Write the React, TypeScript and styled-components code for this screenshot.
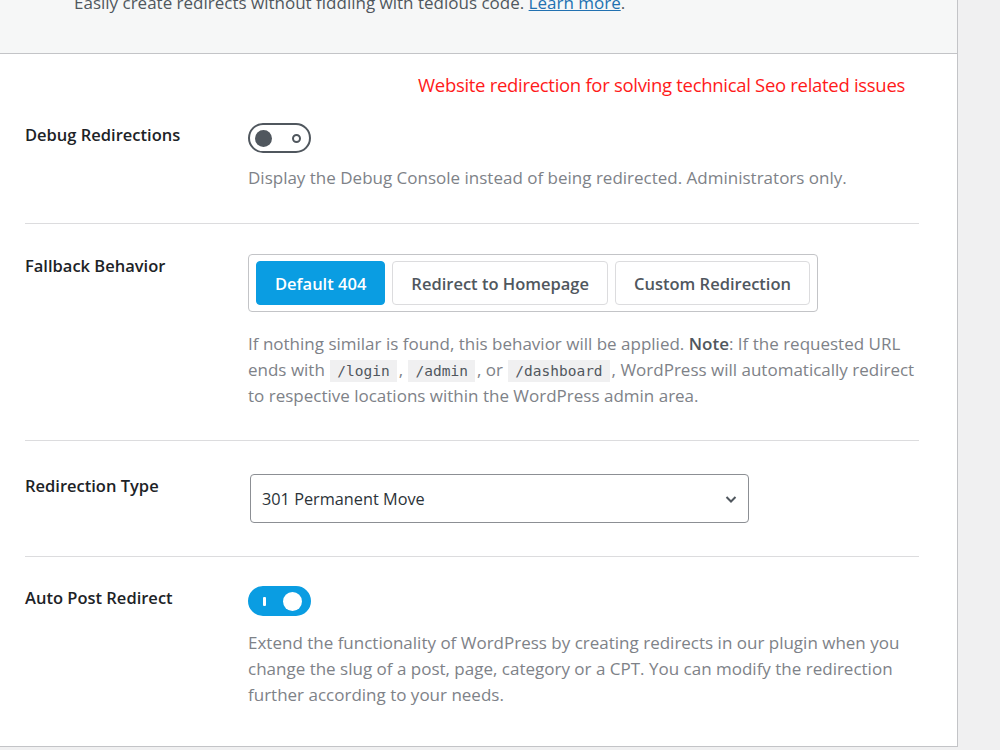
import React from "react";
import styled, { createGlobalStyle } from "styled-components";

const GlobalStyle = createGlobalStyle`
  body {
    margin: 0;
    background: #f0f0f1;
    font-family: "Open Sans", "Noto Sans", sans-serif;
    color: #1d2327;
  }
`;

const Page = styled.div`
  display: flex;
  width: 1000px;
  height: 750px;
  overflow: hidden;
`;

const Card = styled.div`
  width: 957px;
  height: 746px;
  background: #fff;
  border-right: 1px solid #c3c4c7;
  border-bottom: 1px solid #c3c4c7;
  display: flex;
  flex-direction: column;
`;

const Header = styled.div`
  height: 53px;
  background: #f6f7f7;
  border-bottom: 1px solid #c3c4c7;
  padding-left: 74px;
  overflow: hidden;
`;

const Intro = styled.p`
  margin: -10px 0 0;
  font-size: 17px;
  line-height: 26px;
  color: #50575e;

  a {
    color: #2271b1;
  }
`;

const Body = styled.div`
  padding: 0 38px 0 25px;
`;

const Notice = styled.div`
  display: flex;
  justify-content: flex-end;
  padding: 18px 14px 0 0;
  height: 19px;
  font-size: 18.5px;
  line-height: 26px;
  color: #ff1a1a;
  letter-spacing: -0.3px;
`;

const Row = styled.div<{ $top: number; $bottom: number; $last?: boolean }>`
  display: grid;
  grid-template-columns: 223px 1fr;
  padding: ${(p) => p.$top}px 0 ${(p) => p.$bottom}px;
  border-bottom: ${(p) => (p.$last ? "none" : "1px solid #dcdcde")};
`;

const Label = styled.div`
  font-size: 16.5px;
  font-weight: 600;
  line-height: 24px;
  color: #1d2327;
`;

const Field = styled.div`
  display: flex;
  flex-direction: column;
  align-items: flex-start;
`;

const Description = styled.p<{ $gap: number }>`
  margin: ${(p) => p.$gap}px 0 0;
  font-size: 17px;
  line-height: 26px;
  color: #7e8288;
  max-width: 672px;

  strong {
    color: #50575e;
    font-weight: 600;
  }
`;

const Code = styled.code`
  font-family: "DejaVu Sans Mono", "Liberation Mono", monospace;
  font-size: 14.5px;
  line-height: 20px;
  background: #f0f0f1;
  color: #50575e;
  padding: 3px 7px;
  margin: 0 2px 0 1px;
`;

const Toggle = styled.div<{ $on?: boolean }>`
  box-sizing: border-box;
  width: 63px;
  height: 30px;
  border-radius: 15px;
  border: 2px solid ${(p) => (p.$on ? "#0a9de2" : "#50575e")};
  background: ${(p) => (p.$on ? "#0a9de2" : "#fff")};
  display: flex;
  align-items: center;
  justify-content: space-between;
  padding: 0 ${(p) => (p.$on ? "7px 0 13px" : "8px 0 5px")};
`;

const Knob = styled.span<{ $on?: boolean }>`
  width: ${(p) => (p.$on ? 19 : 17)}px;
  height: ${(p) => (p.$on ? 19 : 17)}px;
  border-radius: 50%;
  background: ${(p) => (p.$on ? "#fff" : "#50575e")};
`;

const Ring = styled.span`
  box-sizing: border-box;
  width: 9px;
  height: 9px;
  border-radius: 50%;
  border: 2px solid #50575e;
`;

const Bar = styled.span`
  width: 3px;
  height: 9px;
  border-radius: 1px;
  background: #fff;
`;

const Group = styled.div`
  display: flex;
  gap: 7px;
  padding: 6px 7px;
  border: 1px solid #c3c4c7;
  border-radius: 4px;
`;

const Choice = styled.button<{ $active?: boolean }>`
  height: 44px;
  padding: 0 18px;
  border-radius: 4px;
  border: 1px solid ${(p) => (p.$active ? "#0a9de2" : "#dcdcde")};
  background: ${(p) => (p.$active ? "#0a9de2" : "#fff")};
  color: ${(p) => (p.$active ? "#fff" : "#50575e")};
  font-family: inherit;
  font-size: 16.5px;
  font-weight: 600;
`;

const Select = styled.div`
  box-sizing: border-box;
  width: 499px;
  height: 49px;
  margin-left: 2px;
  border: 1px solid #8c8f94;
  border-radius: 4px;
  display: flex;
  align-items: center;
  justify-content: space-between;
  padding: 0 10px 0 11px;
  font-size: 16.3px;
  color: #2c3338;
`;

export default function App() {
  return (
    <Page>
      <GlobalStyle />
      <Card>
        <Header>
          <Intro>
            Easily create redirects without fiddling with tedious code.{" "}
            <a href="#">Learn more</a>.
          </Intro>
        </Header>
        <Body>
          <Notice>Website redirection for solving technical Seo related issues</Notice>
          <Row $top={32} $bottom={32}>
            <Label>Debug Redirections</Label>
            <Field>
              <Toggle>
                <Knob />
                <Ring />
              </Toggle>
              <Description $gap={12}>
                Display the Debug Console instead of being redirected. Administrators only.
              </Description>
            </Field>
          </Row>
          <Row $top={30} $bottom={31}>
            <Label>Fallback Behavior</Label>
            <Field>
              <Group>
                <Choice $active>Default 404</Choice>
                <Choice>Redirect to Homepage</Choice>
                <Choice>Custom Redirection</Choice>
              </Group>
              <Description $gap={19}>
                If nothing similar is found, this behavior will be applied. <strong>Note</strong>: If
                the requested URL ends with <Code>/login</Code>, <Code>/admin</Code>, or{" "}
                <Code>/dashboard</Code>, WordPress will automatically redirect to respective
                locations within the WordPress admin area.
              </Description>
            </Field>
          </Row>
          <Row $top={33} $bottom={33}>
            <Label>Redirection Type</Label>
            <Field>
              <Select>
                301 Permanent Move
                <svg width="14" height="14" viewBox="0 0 14 14">
                  <path d="M2.5 5l4.5 4.5L11.5 5" fill="none" stroke="#50575e" strokeWidth="2" />
                </svg>
              </Select>
            </Field>
          </Row>
          <Row $top={29} $bottom={30} $last>
            <Label>Auto Post Redirect</Label>
            <Field>
              <Toggle $on>
                <Bar />
                <Knob $on />
              </Toggle>
              <Description $gap={14}>
                Extend the functionality of WordPress by creating redirects in our plugin when you
                change the slug of a post, page, category or a CPT. You can modify the redirection
                further according to your needs.
              </Description>
            </Field>
          </Row>
        </Body>
      </Card>
    </Page>
  );
}
